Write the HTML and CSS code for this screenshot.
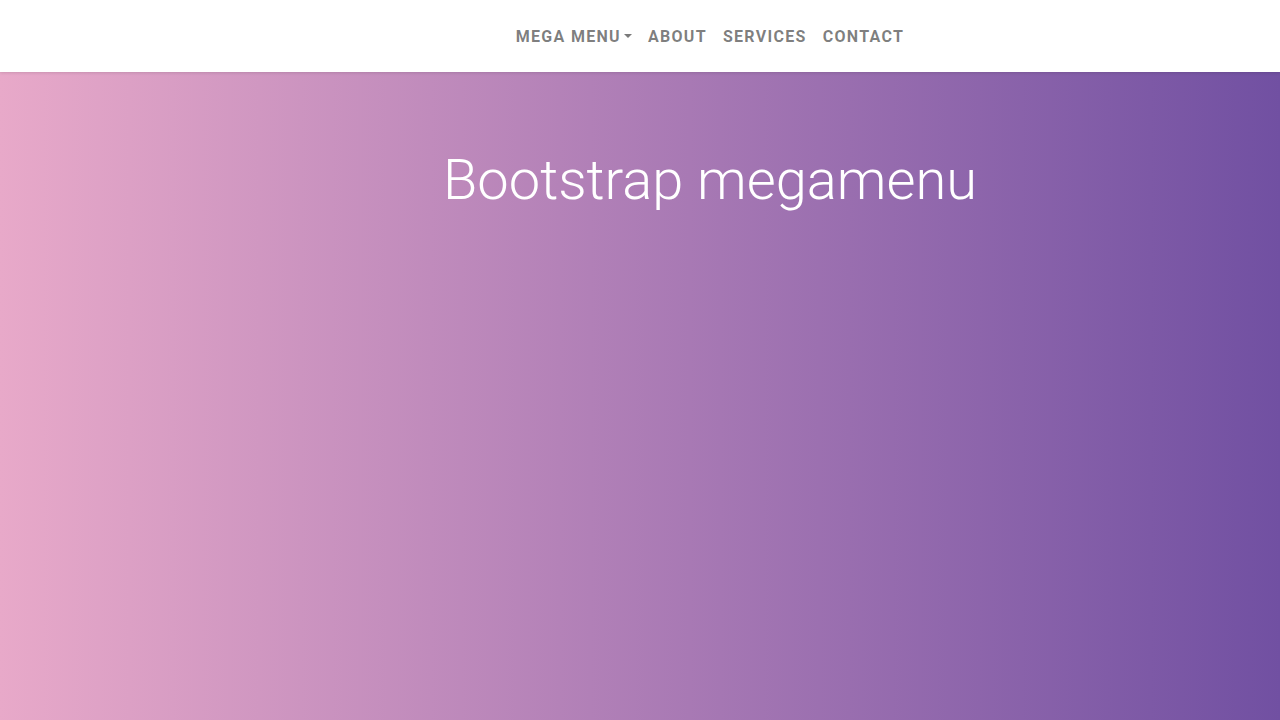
FILE: index.html
```html
<!DOCTYPE html>
<html lang="en">
<head>
    <meta charset="UTF-8">
    <meta name="viewport" content="width=device-width, initial-scale=1.0">
    <title>Bootstrap megamenu</title>
    <link rel="stylesheet" href="styles.css">
</head>
<body>
    <nav class="navbar">
        <ul class="nav-links">
            <li><a href="#" class="dropdown-toggle">Mega Menu</a></li>
            <li><a href="#">About</a></li>
            <li><a href="#">Services</a></li>
            <li><a href="#">Contact</a></li>
        </ul>
    </nav>

    <div class="hero">
        <h1>Bootstrap megamenu</h1>
    </div>
</body>
</html>
```

FILE: styles.css
```css
/* Basis */
body {
    font-family: 'Roboto', 'Liberation Sans', sans-serif;
    margin: 0;
    padding: 0;
    background: linear-gradient(to right, #e8a9c9, #7150a2);
    min-height: 100vh;
}

/* Navbar */
.navbar {
    height: 72px;
    background-color: #fff;
    display: flex;
    align-items: center;
    justify-content: center;
    padding-left: 140px;
    box-shadow: 0 1px 3px rgba(0, 0, 0, 0.12);
    position: relative;
    z-index: 10;
}

.nav-links {
    list-style: none;
    margin: 0;
    padding: 0;
    display: flex;
}

.nav-links a {
    display: block;
    padding: 8px 8px;
    color: rgba(0, 0, 0, 0.52);
    text-decoration: none;
    text-transform: uppercase;
    font-size: 16px;
    font-weight: 700;
    letter-spacing: 1.3px;
}

.dropdown-toggle::after {
    content: "";
    display: inline-block;
    margin-left: 3px;
    vertical-align: 4px;
    border-top: 4px solid;
    border-left: 4px solid transparent;
    border-right: 4px solid transparent;
}

/* Hero */
.hero {
    text-align: center;
    padding-left: 140px;
    padding-top: 75px;
}

.hero h1 {
    margin: 0;
    color: #fff;
    font-size: 56px;
    font-weight: 300;
    line-height: 1.2;
}
```
